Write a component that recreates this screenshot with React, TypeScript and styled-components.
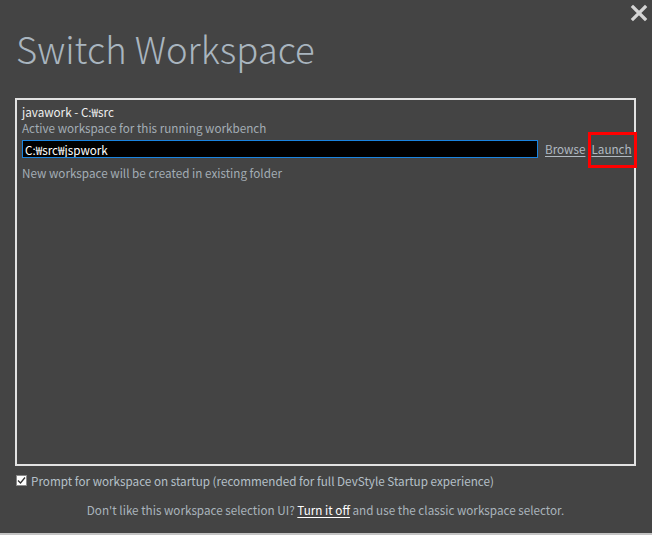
import React, { useState } from "react";
import styled, { createGlobalStyle } from "styled-components";

const GlobalStyle = createGlobalStyle`
  html, body {
    margin: 0;
    padding: 0;
    background: #444444;
  }
  body {
    font-family: "Noto Sans CJK KR", "Noto Sans", sans-serif;
  }
`;

const Dialog = styled.div`
  width: 652px;
  height: 535px;
  box-sizing: border-box;
  background: #444444;
  border-bottom: 2px solid #c4c4c4;
  display: flex;
  flex-direction: column;
  padding: 0 16px 0 15px;
  font-size: 11.7px;
`;

const Header = styled.div`
  display: flex;
  justify-content: space-between;
  align-items: flex-start;
  height: 98px;
`;

const Title = styled.h1`
  margin: 25px 0 0 1px;
  font-family: "Noto Sans CJK KR", "Noto Sans", sans-serif;
  font-weight: 300;
  font-size: 36.5px;
  line-height: 48px;
  color: #a9b5bf;
`;

const CloseButton = styled.button`
  margin: 4px -12px 0 0;
  padding: 0;
  border: none;
  background: none;
  width: 18px;
  height: 18px;
  cursor: pointer;
  display: flex;
`;

const Panel = styled.div`
  height: 368px;
  box-sizing: border-box;
  border: 2px solid #e2e2e2;
  padding: 4px 5px;
  display: flex;
  flex-direction: column;
`;

const CurrentName = styled.div`
  color: #eeeeee;
  line-height: 16px;
`;

const Muted = styled.div`
  color: #a3adb5;
  line-height: 15px;
`;

const InputRow = styled.div`
  display: flex;
  align-items: center;
  margin-top: 5px;
  height: 18px;
`;

const PathInput = styled.input`
  flex-shrink: 0;
  width: 516px;
  height: 18px;
  box-sizing: border-box;
  background: #000000;
  color: #ffffff;
  border: 1px solid #1a84e0;
  outline: none;
  padding: 0 2px;
  font-family: inherit;
  font-size: 11.7px;
`;

const LinkText = styled.a<{ $bright?: boolean }>`
  color: ${(p) => (p.$bright ? "#ffffff" : "#b0b9c1")};
  text-decoration: underline;
  text-underline-offset: 2px;
  cursor: pointer;
`;

const RowLinks = styled.div`
  display: flex;
  gap: 6px;
  margin-left: 7px;
  line-height: 16px;
  white-space: nowrap;
`;

const Highlighted = styled.span`
  position: relative;
  &::after {
    content: "";
    position: absolute;
    inset: -9px -5px -11px -3px;
    border: 3px solid #ff0000;
  }
`;

const Note = styled(Muted)`
  margin-top: 7px;
`;

const CheckRow = styled.label`
  display: flex;
  align-items: center;
  gap: 4px;
  margin-top: 7px;
  height: 14px;
  color: #b5c0c8;
`;

const Box = styled.span`
  width: 11px;
  height: 11px;
  box-sizing: border-box;
  background: #ffffff;
  border: 1px solid #8a8a8a;
  margin-left: 1px;
  display: flex;
  align-items: center;
  justify-content: center;
`;

const Footer = styled.div`
  margin-top: 14px;
  text-align: center;
  color: #aab4bc;
`;

export default function App() {
  const [checked, setChecked] = useState(true);
  return (
    <>
      <GlobalStyle />
      <Dialog>
        <Header>
          <Title>Switch Workspace</Title>
          <CloseButton aria-label="Close">
            <svg width="18" height="18" viewBox="0 0 18 18">
              <path
                d="M3 3 L15 15 M15 3 L3 15"
                stroke="#d4d4d4"
                strokeWidth="3.2"
                strokeLinecap="square"
              />
            </svg>
          </CloseButton>
        </Header>
        <Panel>
          <CurrentName>javawork - C:₩src</CurrentName>
          <Muted>Active workspace for this running workbench</Muted>
          <InputRow>
            <PathInput defaultValue="C:₩src₩jspwork" />
            <RowLinks>
              <LinkText>Browse</LinkText>
              <Highlighted>
                <LinkText>Launch</LinkText>
              </Highlighted>
            </RowLinks>
          </InputRow>
          <Note>New workspace will be created in existing folder</Note>
        </Panel>
        <CheckRow onClick={() => setChecked(!checked)}>
          <Box>
            {checked && (
              <svg width="9" height="9" viewBox="0 0 9 9">
                <path d="M1 4.5 L3.5 7 L8 1.5" stroke="#333" strokeWidth="1.3" fill="none" />
              </svg>
            )}
          </Box>
          Prompt for workspace on startup (recommended for full DevStyle Startup experience)
        </CheckRow>
        <Footer>
          Don't like this workspace selection UI? <LinkText $bright>Turn it off</LinkText> and use
          the classic workspace selector.
        </Footer>
      </Dialog>
    </>
  );
}
